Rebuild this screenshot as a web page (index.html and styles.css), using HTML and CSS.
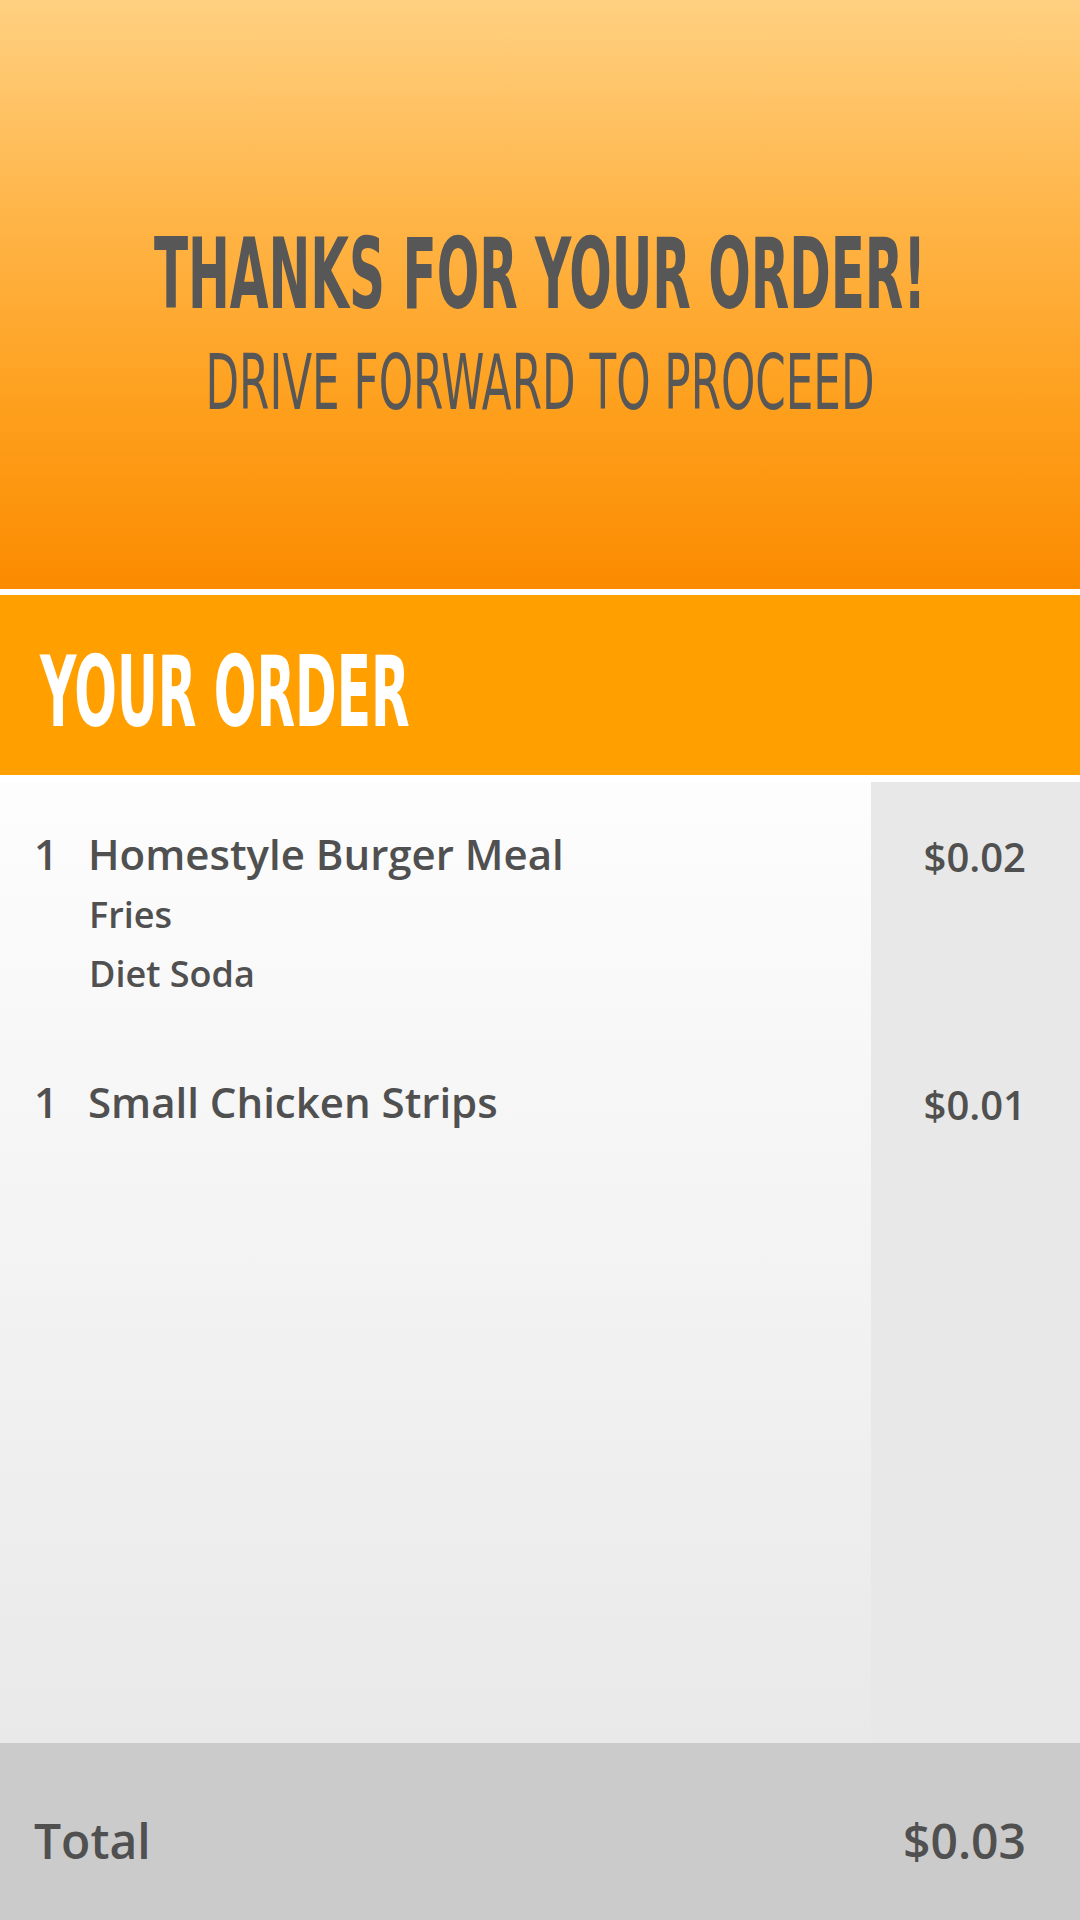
FILE: index.html
```html
<!DOCTYPE html>
<html lang="en">
<head>
<meta charset="utf-8">
<title>Thanks for your order</title>
<link rel="stylesheet" href="styles.css">
</head>
<body>
<div class="screen">
  <header class="hero">
    <h1 class="hero-title"><span class="squeeze-bold">THANKS FOR YOUR ORDER!</span></h1>
    <p class="hero-sub"><span class="squeeze-light">DRIVE FORWARD TO PROCEED</span></p>
  </header>
  <div class="band">
    <h2 class="band-title"><span class="squeeze-left">YOUR ORDER</span></h2>
  </div>
  <main class="order-list">
    <div class="item">
      <div class="item-line"><span class="qty">1</span><span class="name">Homestyle Burger Meal</span></div>
      <div class="mod">Fries</div>
      <div class="mod">Diet Soda</div>
    </div>
    <div class="price">$0.02</div>
    <div class="item">
      <div class="item-line"><span class="qty">1</span><span class="name">Small Chicken Strips</span></div>
    </div>
    <div class="price">$0.01</div>
  </main>
  <footer class="total">
    <span class="total-label">Total</span>
    <span class="total-value">$0.03</span>
  </footer>
</div>
</body>
</html>
```

FILE: styles.css
```css
html, body {
  margin: 0;
  padding: 0;
  background: #ffffff;
}

.screen {
  width: 1080px;
  height: 1920px;
  display: flex;
  flex-direction: column;
  font-family: "Open Sans", "Noto Sans", sans-serif;
  color: #505050;
}

.hero {
  height: 589px;
  box-sizing: border-box;
  padding-top: 225px;
  background: linear-gradient(to bottom, #ffd081 0%, #ffb64a 35%, #fe9f1c 70%, #fb8b00 100%);
  color: #575757;
  font-family: "DejaVu Sans Condensed", "DejaVu Sans", sans-serif;
}

.hero-title {
  margin: 0;
  display: flex;
  justify-content: center;
  font-size: 98px;
  line-height: 98px;
  font-weight: 700;
}

.hero-sub {
  margin: 21px 0 0;
  display: flex;
  justify-content: center;
  font-size: 77px;
  line-height: 77px;
  font-weight: 400;
}

.squeeze-bold {
  display: block;
  flex: none;
  transform: scaleX(0.567);
  white-space: nowrap;
}

.squeeze-light {
  display: block;
  flex: none;
  transform: scaleX(0.63);
  white-space: nowrap;
}

.squeeze-left {
  display: inline-block;
  transform: scaleX(0.569);
  transform-origin: left center;
  white-space: nowrap;
}

.band {
  margin-top: 6px;
  height: 180px;
  box-sizing: border-box;
  padding: 48px 0 0 40px;
  background: #ffa000;
  color: #ffffff;
  font-family: "DejaVu Sans Condensed", "DejaVu Sans", sans-serif;
}

.band-title {
  margin: 0;
  font-size: 98px;
  line-height: 98px;
  font-weight: 700;
}

.order-list {
  margin-top: 7px;
  flex: 1;
  display: grid;
  grid-template-columns: 1fr 209px;
  align-content: start;
  row-gap: 69px;
  padding-top: 42px;
  background:
    linear-gradient(to right, transparent 871px, #e8e8e8 871px),
    linear-gradient(to bottom, #fdfdfd 0%, #f5f5f5 40%, #e9e9e9 100%);
}

.item {
  padding-left: 34px;
}

.item-line {
  display: flex;
  font-size: 42px;
  line-height: 59px;
  font-weight: 600;
}

.qty {
  width: 54px;
}

.mod {
  padding-left: 55px;
  font-size: 36px;
  line-height: 59px;
  font-weight: 600;
}

.item-line + .mod {
  margin-top: 2px;
}

.price {
  padding-right: 54px;
  text-align: right;
  font-size: 40px;
  line-height: 59px;
  font-weight: 600;
  padding-top: 3px;
}

.total {
  height: 177px;
  box-sizing: border-box;
  padding: 68px 54px 0 34px;
  display: flex;
  justify-content: space-between;
  align-items: flex-start;
  background: #cbcbcb;
  font-size: 48px;
  line-height: 60px;
  font-weight: 600;
}
```
